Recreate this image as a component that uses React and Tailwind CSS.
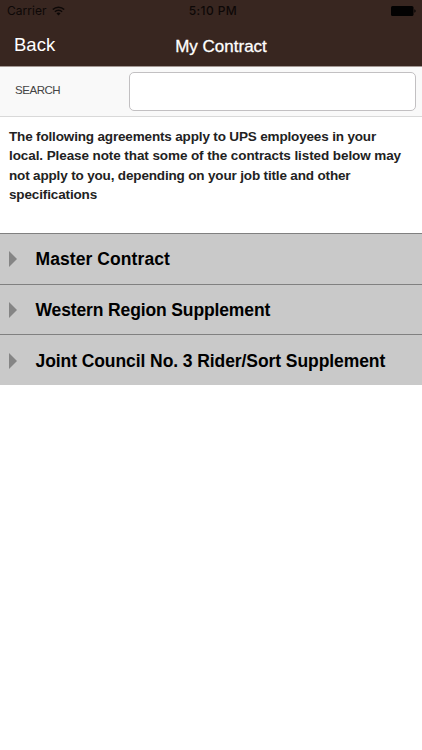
import { useState } from "react";

const contracts = [
    { id: 1, title: "Master Contract", height: "h-[51px]", spacing: "tracking-[0.08px]" },
    { id: 2, title: "Western Region Supplement", height: "h-[50px] pt-px", spacing: "tracking-[-0.13px]" },
    { id: 3, title: "Joint Council No. 3 Rider/Sort Supplement", height: "h-[51px] pt-px", spacing: "tracking-[-0.08px]" },
];

const intro = [
    { text: "The following agreements apply to UPS employees in your", spacing: "tracking-[-0.16px]" },
    { text: "local. Please note that some of the contracts listed below may", spacing: "tracking-[-0.09px]" },
    { text: "not apply to you, depending on your job title and other", spacing: "tracking-[-0.16px]" },
    { text: "specifications", spacing: "tracking-[-0.14px]" },
];

const WifiIcon = () => (
    <svg width="13" height="10" viewBox="0 0 13 10" fill="none" stroke="#0d0807" strokeWidth="1.5">
        <path d="M0.8 3.6C4 0.3 9 0.3 12.2 3.6" />
        <path d="M2.9 5.8C4.9 3.8 8.1 3.8 10.1 5.8" />
        <path d="M6.5 9.4L4.5 7.4C5.6 6.3 7.4 6.3 8.5 7.4Z" fill="#0d0807" stroke="none" />
    </svg>
);

const BatteryIcon = () => (
    <svg width="25" height="10" viewBox="0 0 25 10" fill="#030202">
        <rect width="22.5" height="10" rx="1.6" />
        <path d="M23.4 3.2C25 3.8 25 6.2 23.4 6.8Z" />
    </svg>
);

const StatusBar = () => (
    <div className="grid grid-cols-3 items-center h-[22px] pl-[7px] pr-[6px] font-['Inter',sans-serif] text-[12px] leading-[22px] text-[#0d0807]">
        <div className="flex items-center gap-[5px]">
            <span className="tracking-[0.05px]">Carrier</span>
            <WifiIcon />
        </div>
        <span className="pl-[3px] text-center font-medium tracking-[0.4px]">5:10 PM</span>
        <div className="flex justify-end">
            <BatteryIcon />
        </div>
    </div>
);

const Header = () => (
    <header className="h-[67px] bg-[#382620] border-b border-[#a39894]">
        <StatusBar />
        <div className="grid grid-cols-[1fr_auto_1fr] items-center h-[44px] pt-[3px] pl-5 text-white">
            <button type="button" className="-ml-[6px] pb-[2px] text-left text-[18.5px] leading-6">
                Back
            </button>
            <h1 className="pt-[2px] text-[17px] leading-6 [-webkit-text-stroke:0.3px_white]">My Contract</h1>
        </div>
    </header>
);

const SearchBar = ({ value, onChange }) => (
    <div className="flex items-center h-[50px] pl-[15px] pr-[6px] bg-[#f9f9f9] border-b border-[#d9d9d9]">
        <label htmlFor="search" className="w-[114px] pb-[2px] text-[11.5px] tracking-[-0.45px] text-[#444]">
            SEARCH
        </label>
        <input
            id="search"
            type="text"
            value={value}
            onChange={(e) => onChange(e.target.value)}
            className="flex-1 min-w-0 h-[39px] px-2 bg-white border border-[#c2c0c2] rounded-[5px] outline-none"
        />
    </div>
);

const ContractRow = ({ title, height, spacing }) => (
    <button
        type="button"
        className={`flex items-center w-full pl-[9px] bg-[#c9c9c9] border-t border-[#808080] text-left ${height}`}
    >
        <svg width="8" height="16" viewBox="0 0 8 16" fill="#858585">
            <path d="M0 0L8 8L0 16Z" />
        </svg>
        <span className={`pl-[18.5px] pt-px text-[17.5px] font-bold text-black whitespace-nowrap ${spacing}`}>{title}</span>
    </button>
);

const App = () => {
    const [search, setSearch] = useState("");

    const visible = contracts.filter((item) => item.title.toLowerCase().includes(search.toLowerCase()));

    return (
        <div className="min-h-screen bg-white font-['Liberation_Sans',Arial,sans-serif]">
            <Header />
            <SearchBar value={search} onChange={setSearch} />
            <p className="h-[116px] pt-[10px] pl-[9px] text-[13.5px] leading-[19.3px] font-bold text-[#222] whitespace-nowrap">
                {intro.map((line) => (
                    <span key={line.text} className={`block ${line.spacing}`}>
                        {line.text}
                    </span>
                ))}
            </p>
            <div>
                {visible.map((item) => (
                    <ContractRow key={item.id} {...item} />
                ))}
            </div>
        </div>
    );
};

export default App;
